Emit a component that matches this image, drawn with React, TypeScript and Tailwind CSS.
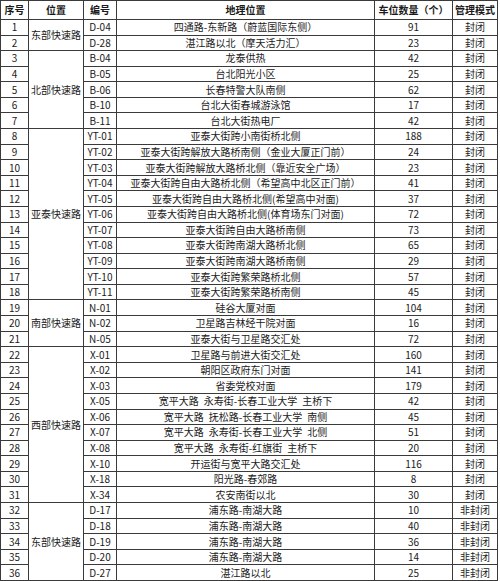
import React from "react";

type Row = [string, string, string, string];

const rows: Row[] = [
  ["1", "D-04", "四通路-东新路（蔚蓝国际东侧）", "91"],
  ["2", "D-28", "湛江路以北（摩天活力汇）", "23"],
  ["3", "B-04", "龙泰供热", "42"],
  ["4", "B-05", "台北阳光小区", "25"],
  ["5", "B-06", "长春特警大队南侧", "62"],
  ["6", "B-10", "台北大街春城游泳馆", "17"],
  ["7", "B-11", "台北大街热电厂", "42"],
  ["8", "YT-01", "亚泰大街跨小南街桥北侧", "188"],
  ["9", "YT-02", "亚泰大街跨解放大路桥南侧（金业大厦正门前）", "24"],
  ["10", "YT-03", "亚泰大街跨解放大路桥北侧（靠近安全广场）", "23"],
  ["11", "YT-04", "亚泰大街跨自由大路桥北侧（希望高中北区正门前）", "41"],
  ["12", "YT-05", "亚泰大街跨自由大路桥北侧(希望高中对面)", "37"],
  ["13", "YT-06", "亚泰大街跨自由大路桥北侧(体育场东门对面)", "72"],
  ["14", "YT-07", "亚泰大街跨自由大路桥南侧", "73"],
  ["15", "YT-08", "亚泰大街跨南湖大路桥北侧", "65"],
  ["16", "YT-09", "亚泰大街跨南湖大路桥南侧", "29"],
  ["17", "YT-10", "亚泰大街跨繁荣路桥北侧", "57"],
  ["18", "YT-11", "亚泰大街跨繁荣路桥南侧", "45"],
  ["19", "N-01", "硅谷大厦对面", "104"],
  ["20", "N-02", "卫星路吉林经干院对面", "16"],
  ["21", "N-05", "亚泰大街与卫星路交汇处", "72"],
  ["22", "X-01", "卫星路与前进大街交汇处", "160"],
  ["23", "X-02", "朝阳区政府东门对面", "141"],
  ["24", "X-03", "省委党校对面", "179"],
  ["25", "X-05", "宽平大路\u2002永寿街-长春工业大学\u2002主桥下", "42"],
  ["26", "X-06", "宽平大路\u2002抚松路-长春工业大学\u2002南侧", "45"],
  ["27", "X-07", "宽平大路\u2002永寿街-长春工业大学\u2002北侧", "51"],
  ["28", "X-08", "宽平大路\u2002永寿街-红旗街\u2002主桥下", "20"],
  ["29", "X-10", "开运街与宽平大路交汇处", "116"],
  ["30", "X-18", "阳光路-春郊路", "8"],
  ["31", "X-34", "农安南街以北", "30"],
  ["32", "D-17", "浦东路-南湖大路", "10"],
  ["33", "D-18", "浦东路-南湖大路", "40"],
  ["34", "D-19", "浦东路-南湖大路", "36"],
  ["35", "D-20", "浦东路-南湖大路", "14"],
  ["36", "D-27", "湛江路以北", "25"],
];

const groups: Record<number, { name: string; span: string }> = {
  0: { name: "东部快速路", span: "row-span-2" },
  2: { name: "北部快速路", span: "row-span-5" },
  7: { name: "亚泰快速路", span: "row-span-11" },
  18: { name: "南部快速路", span: "row-span-3" },
  21: { name: "西部快速路", span: "row-span-10" },
  31: { name: "东部快速路", span: "row-span-5" },
};

const cell =
  "bg-white flex items-center justify-center whitespace-nowrap leading-none overflow-hidden";

export default function App() {
  return (
    <div
      className="w-[500px] h-[581px] bg-white text-[#1a1a1a] text-[10px]"
      style={{ fontFamily: '"Noto Sans CJK SC", "Noto Sans", sans-serif' }}
    >
      <div className="w-[498px] h-[581px] bg-[#3a3a3a] p-px grid gap-px grid-cols-[27px_54px_32px_257px_77px_44px] grid-rows-[18px_repeat(36,minmax(0,1fr))]">
        <div className={`${cell} font-bold`}>序号</div>
        <div className={`${cell} font-bold`}>位置</div>
        <div className={`${cell} font-bold`}>编号</div>
        <div className={`${cell} font-bold`}>地理位置</div>
        <div className={`${cell} font-bold`}>车位数量（个）</div>
        <div className={`${cell} font-bold`}>管理模式</div>
        {rows.map((r, i) => (
          <React.Fragment key={i}>
            <div className={cell}>{r[0]}</div>
            {groups[i] && (
              <div className={`${cell} ${groups[i].span}`}>{groups[i].name}</div>
            )}
            <div className={cell}>{r[1]}</div>
            <div className={cell}>{r[2]}</div>
            <div className={cell}>{r[3]}</div>
            <div className={cell}>{i >= 31 ? "非封闭" : "封闭"}</div>
          </React.Fragment>
        ))}
      </div>
    </div>
  );
}
